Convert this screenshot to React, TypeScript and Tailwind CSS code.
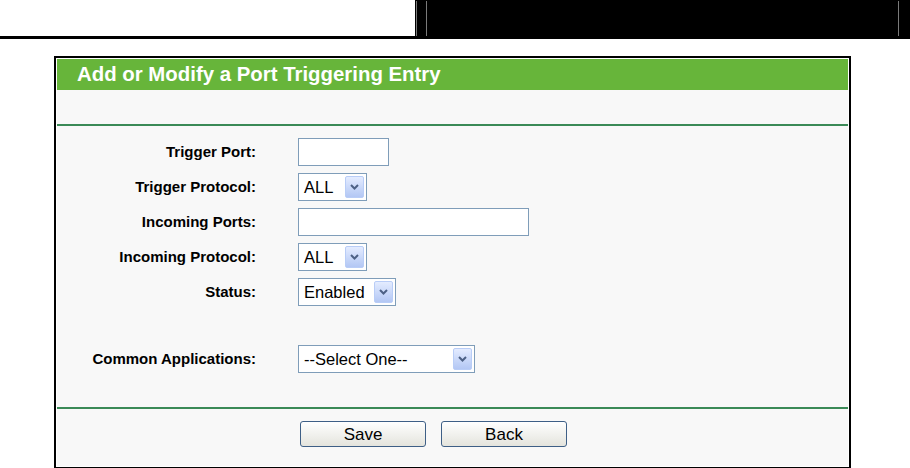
import React from 'react';

const Chevron = () => (
  <svg width="9" height="6" viewBox="0 0 9 6" fill="none">
    <path d="M1 1l3.5 3.5L8 1" stroke="#4d6185" strokeWidth={2} />
  </svg>
);

const Select = ({ value, width }: { value: string; width: string }) => (
  <div className={`${width} h-[28px] border border-[#7f9db9] bg-white flex items-center justify-between pl-[5px] pr-[2px]`}>
    <span className="text-[16.5px] text-black leading-none">{value}</span>
    <div className="w-[19px] h-[22px] rounded-[2px] border border-[#b9cdf7] bg-gradient-to-b from-[#e4ecff] to-[#b3c7f4] flex items-center justify-center">
      <Chevron />
    </div>
  </div>
);

const TextInput = ({ width }: { width: string }) => (
  <div className={`${width} h-[28px] border border-[#7f9db9] bg-white`} />
);

const Row = ({ label, children }: { label: string; children: React.ReactNode }) => (
  <div className="flex items-center h-[28px]">
    <div className="w-[199px] text-right text-[15px] font-bold text-black">{label}</div>
    <div className="ml-[42px]">{children}</div>
  </div>
);

const Button = ({ label }: { label: string }) => (
  <button className="w-[126px] h-[26px] rounded-[3px] border border-[#3e5f86] bg-gradient-to-b from-white to-[#e4e4dd] text-[17px] text-black leading-none">
    {label}
  </button>
);

export default function App() {
  return (
    <div className="w-[910px] h-[468px] bg-white font-['Liberation_Sans',Arial,sans-serif] overflow-hidden">
      <div className="flex h-[39px]">
        <div className="w-[415px] border-b-[3px] border-black" />
        <div className="flex-1 bg-black flex pt-px pb-[3px]">
          <div className="w-px bg-[#7a7a7a] ml-px" />
          <div className="w-px bg-[#7a7a7a] ml-[9px]" />
          <div className="flex-1" />
          <div className="w-px bg-[#7a7a7a] mr-[11px]" />
        </div>
      </div>

      <div className="ml-[54px] mt-[17px] w-[797px] border-2 border-black bg-white p-px">
        <div className="bg-[#f8f8f8]">
          <div className="h-[31px] bg-[#67b53a] flex items-center pl-[20px]">
            <span className="text-[20.4px] font-bold text-white">Add or Modify a Port Triggering Entry</span>
          </div>
          <div className="h-[34px]" />
          <div className="border-t-2 border-[#3b8a57] pt-[12px] pb-[34px] flex flex-col">
            <div className="flex flex-col gap-[7px]">
              <Row label="Trigger Port:">
                <TextInput width="w-[91px]" />
              </Row>
              <Row label="Trigger Protocol:">
                <Select value="ALL" width="w-[69px]" />
              </Row>
              <Row label="Incoming Ports:">
                <TextInput width="w-[231px]" />
              </Row>
              <Row label="Incoming Protocol:">
                <Select value="ALL" width="w-[69px]" />
              </Row>
              <Row label="Status:">
                <Select value="Enabled" width="w-[98px]" />
              </Row>
            </div>
            <div className="mt-[39px]">
              <Row label="Common Applications:">
                <Select value="--Select One--" width="w-[177px]" />
              </Row>
            </div>
          </div>
          <div className="border-t-2 border-[#3b8a57] pt-[12px] pb-[19px] pl-[243px] flex gap-[15px]">
            <Button label="Save" />
            <Button label="Back" />
          </div>
        </div>
      </div>
    </div>
  );
}
